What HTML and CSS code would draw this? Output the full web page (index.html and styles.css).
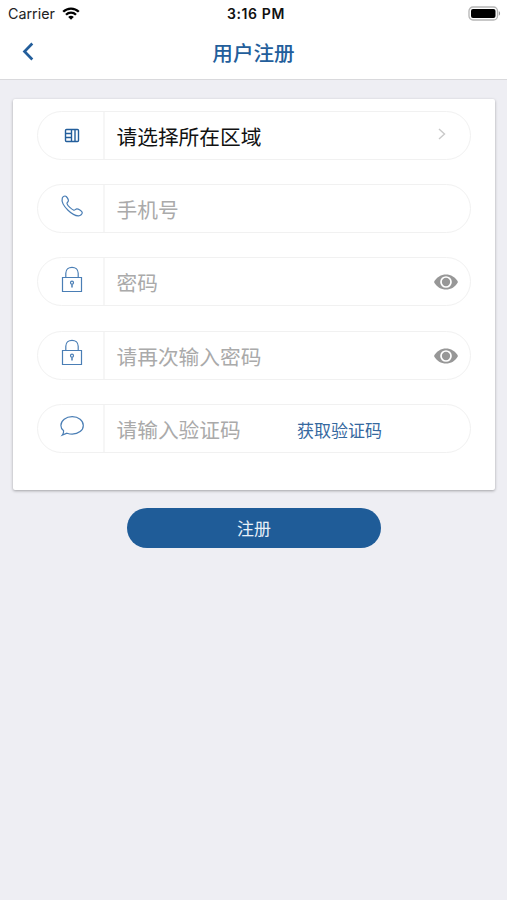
FILE: index.html
```html
<!DOCTYPE html>
<html lang="zh-CN">
<head>
<meta charset="utf-8">
<title>用户注册</title>
<link rel="stylesheet" href="styles.css">
</head>
<body>
<header class="header">
  <div class="status">
    <div class="carrier">
      <span>Carrier</span>
      <svg class="wifi" width="18" height="13" viewBox="0 0 18 13" fill="none" stroke="#000" stroke-width="2.3">
        <path d="M1.2 4.8C5.5.5 12.500.5 16.800 4.800M4 7.800C6.800 5 11.200 5 14 7.800"/>
        <path d="M9 12.700L6.200 9.900C7.700 8.400 10.300 8.400 11.800 9.900Z" fill="#000" stroke="none"/>
      </svg>
    </div>
    <div class="time">3:16 PM</div>
    <svg class="battery" width="33" height="15" viewBox="0 0 33 15">
      <rect x="1" y="1" width="28.500" height="13" rx="4" fill="#fff" stroke="#b5b5b5" stroke-width="1.300"/>
      <rect x="3" y="3" width="24.500" height="9" rx="2" fill="#000"/>
      <path d="M30.800 5.300C32.500 5.800 32.500 9.200 30.800 9.700Z" fill="#999"/>
    </svg>
  </div>
  <nav class="nav">
    <svg class="back" width="14" height="20" viewBox="0 0 14 20" fill="none" stroke="#235e9b" stroke-width="2.700"><path d="M11.300 1.500L3.500 9.500L11.300 17.500"/></svg>
    <h1 class="title">用户注册</h1>
  </nav>
</header>
<main>
  <form class="card">
    <div class="field">
      <div class="icon region"><svg width="32" height="32" viewBox="0 0 32 32" fill="none" stroke="#235e9b" stroke-width="1.400"><rect x="9.500" y="10.500" width="13" height="12" rx="1"/><path d="M15.500 10.500V22.500M19 10.500V22.500M9.500 14.500H15.500M9.500 18.500H15.500"/></svg></div>
      <span class="text selected">请选择所在区域</span>
      <svg class="arrow" width="10" height="14" viewBox="0 0 10 14" fill="none" stroke="#c9c9c9" stroke-width="1.400"><path d="M2 2L7.500 7L2 12"/></svg>
    </div>
    <div class="field">
      <div class="icon"><svg width="32" height="32" viewBox="0 0 32 32" fill="none" stroke="#4a7eb5" stroke-width="1.200"><path d="M6.300 8C7 6.500 9 5.300 10.200 6.500C11.500 8 12.800 10 12.300 11.200C12 12.300 10.700 12.500 11 13.600C11.700 15.800 15.500 19.400 17.800 20.200C19 20.500 19.500 19 20.800 18.900C22.500 18.800 25.500 21 26.200 22.300C26.500 24.200 24.300 25.700 22.600 25.800C19.500 26 15.500 23.600 12 20.200C8.200 16.500 5.200 11.700 6.300 8Z"/></svg></div>
      <span class="text">手机号</span>
    </div>
    <div class="field">
      <div class="icon"><svg width="32" height="32" viewBox="0 0 32 32" fill="none" stroke="#4a7eb5" stroke-width="1.200"><path d="M6.500 13.500H25.500V27.500H6.500ZM9.800 13.500V9.300C9.800 1.300 22.200 1.300 22.200 9.300V13.500"/><circle cx="16" cy="18.700" r="1.500"/><path d="M16 20.200V23.500" stroke-width="1.500"/></svg></div>
      <span class="text">密码</span>
      <svg class="eye" width="24" height="16" viewBox="0 0 24 16"><path d="M0 8C5-2 19-2 24 8C19 18 5 18 0 8Z" fill="#979797"/><circle cx="12" cy="8" r="5" fill="#979797" stroke="#fff" stroke-width="1.700"/></svg>
    </div>
    <div class="field">
      <div class="icon"><svg width="32" height="32" viewBox="0 0 32 32" fill="none" stroke="#4a7eb5" stroke-width="1.200"><path d="M6.500 13.500H25.500V27.500H6.500ZM9.800 13.500V9.300C9.800 1.300 22.200 1.300 22.200 9.300V13.500"/><circle cx="16" cy="18.700" r="1.500"/><path d="M16 20.200V23.500" stroke-width="1.500"/></svg></div>
      <span class="text">请再次输入密码</span>
      <svg class="eye" width="24" height="16" viewBox="0 0 24 16"><path d="M0 8C5-2 19-2 24 8C19 18 5 18 0 8Z" fill="#979797"/><circle cx="12" cy="8" r="5" fill="#979797" stroke="#fff" stroke-width="1.700"/></svg>
    </div>
    <div class="field">
      <div class="icon"><svg width="32" height="32" viewBox="0 0 32 32" fill="none" stroke="#4a7eb5" stroke-width="1.200"><path d="M7.600 19.800C5.800 18.400 4.900 16.500 4.900 14.400C4.900 9.500 9.900 5.700 16.200 5.700S27.300 9.500 27.300 14.400S22.500 23.100 16.200 23.100C14.300 23.100 12.600 22.700 11 22.200L6.300 24.100C7.300 22.800 7.800 21.800 7.600 19.800Z"/></svg></div>
      <span class="text">请输入验证码</span>
      <span class="code">获取验证码</span>
    </div>
  </form>
  <button class="submit" type="button">注册</button>
</main>
</body>
</html>
```
FILE: styles.css
```css
* { box-sizing: border-box; }
body {
  margin: 0;
  min-height: 900px;
  background: #eeeef3;
  font-family: "Liberation Sans", "Noto Sans CJK SC", sans-serif;
}
.header {
  height: 80px;
  background: #fff;
  border-bottom: 1px solid #d9d9dc;
}
.status {
  display: grid;
  grid-template-columns: 1fr auto 1fr;
  align-items: center;
  height: 27px;
  padding: 0 6px 0 8px;
  font-family: Inter, sans-serif;
  color: #222;
}
.carrier { display: flex; align-items: center; gap: 7px; font-size: 14.300px; }
.wifi { margin-bottom: 1px; }
.time {
  margin-left: 3px;
  font-weight: 600;
  font-size: 14px;
  letter-spacing: .6px;
  color: #111;
}
.battery { justify-self: end; }
.nav {
  display: grid;
  grid-template-columns: 60px 1fr 60px;
  align-items: center;
  height: 50px;
}
.back { margin-left: 21px; }
.title {
  margin: 0;
  padding-top: 3px;
  text-align: center;
  font-size: 20.600px;
  line-height: 30px;
  font-weight: 500;
  color: #235e9b;
}
.card {
  display: flex;
  flex-direction: column;
  gap: 24.400px;
  width: 482px;
  height: 391px;
  margin: 18.500px 0 0 13px;
  padding: 12px 24px;
  background: #fff;
  border-radius: 2px;
  box-shadow: 0 1px 3px rgba(0, 0, 0, .32);
}
.field {
  display: flex;
  align-items: center;
  flex: none;
  height: 49px;
  width: 434px;
  border: 1px solid #f1f1f1;
  border-radius: 25px;
}
.icon {
  display: flex;
  align-items: center;
  justify-content: flex-end;
  width: 67px;
  height: 100%;
  padding: 0 15px 4px 0;
  border-right: 2px solid #f6f6f6;
}
.region { padding-bottom: 0; }
.text {
  flex: 1;
  margin-left: 11.500px;
  font-size: 20.700px;
  line-height: 30px;
  padding-top: 5px;
  white-space: nowrap;
  color: #aaa;
}
.selected { color: #111; }
.arrow { margin: 0 23px 2px 0; }
.eye { margin: 1px 12px 0 0; }
.code {
  width: 173px;
  padding-top: 7px;
  font-size: 17px;
  line-height: 26px;
  color: #36699f;
}
.submit {
  display: block;
  width: 254px;
  height: 40px;
  margin: 18.500px 0 0 127px;
  padding: 0 0 2px;
  border: 0;
  border-radius: 20px;
  background: #1f5c98;
  color: #e8f0f8;
  font-family: inherit;
  font-size: 17px;
}
```
